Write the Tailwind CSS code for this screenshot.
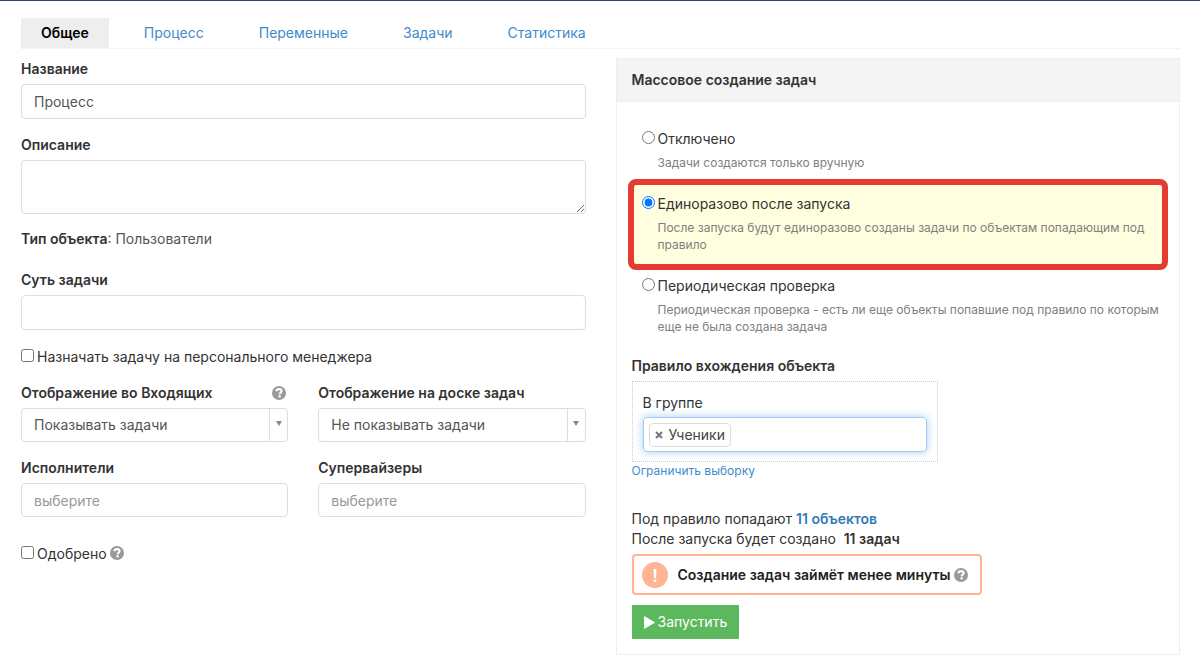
<!DOCTYPE html>
<html lang="ru">
<head>
<meta charset="utf-8">
<meta name="viewport" content="width=device-width, initial-scale=1">
<title>Процесс</title>
<script src="https://cdn.jsdelivr.net/npm/@tailwindcss/browser@4"></script>
</head>
<body class="min-h-screen overflow-x-hidden border-t border-[#2f4562] bg-white font-['Inter','Liberation_Sans',sans-serif] text-sm/5 text-[#333]">
<svg class="hidden" aria-hidden="true">
  <symbol id="help" viewBox="0 0 14 14">
    <circle cx="7" cy="7" r="7" fill="#999"/>
    <path d="M4.4 5.300C4.500 3.800 5.600 3.100 7.100 3.100s2.500.8 2.500 2c0 1.600-1.900 1.600-2 3.100" fill="none" stroke="#fff" stroke-width="2.100"/>
    <rect x="6.500" y="9.200" width="2.200" height="2.200" fill="#fff"/>
  </symbol>
</svg>
<div class="pt-[17px] pr-5 pl-[21px]">
  <nav class="flex gap-[15px] border-b border-[#f4f4f4]">
    <a href="#general" aria-current="page" class="bg-[#eee] px-5 py-[5px] font-semibold text-black">Общее</a>
    <a href="#process" class="px-5 py-[5px] text-[#428bca]">Процесс</a>
    <a href="#vars" class="px-5 py-[5px] text-[#428bca]">Переменные</a>
    <a href="#tasks" class="px-5 py-[5px] text-[#428bca]">Задачи</a>
    <a href="#stats" class="px-5 py-[5px] text-[#428bca]">Статистика</a>
  </nav>

  <form class="mt-[9px] grid grid-cols-2 items-start gap-[30px]">
    <div class="flex flex-col pt-px">
      <label for="name" class="mb-[5px] font-semibold">Название</label>
      <input id="name" type="text" value="Процесс" class="h-[35px] w-full rounded border border-[#ddd] px-3 text-[#555]">

      <label for="descr" class="mt-4 mb-[5px] font-semibold">Описание</label>
      <textarea id="descr" class="block h-[54px] w-full resize-y rounded border border-[#ddd] px-3 py-1.5 text-[#555]"></textarea>

      <p class="mt-[15px] text-[#555]"><b class="font-semibold text-[#333]">Тип объекта</b>: Пользователи</p>

      <label for="essence" class="mt-[21px] mb-[5px] font-semibold">Суть задачи</label>
      <input id="essence" type="text" class="h-[35px] w-full rounded border border-[#ddd] px-3 text-[#555]">

      <label class="mt-[17px] flex items-start gap-[3px]"><input type="checkbox" class="mt-0.5 size-[13px]">Назначать задачу на персонального менеджера</label>

      <div class="mt-4 grid grid-cols-2 gap-x-[30px] gap-y-4">
        <div>
          <div class="mb-[5px] flex items-center justify-between pr-0.5">
            <label for="inbox" class="font-semibold">Отображение во Входящих</label>
            <svg class="size-3.5" role="img" aria-label="Справка"><use href="#help"/></svg>
          </div>
          <div class="relative">
            <select id="inbox" class="h-[34px] w-full appearance-none rounded border border-[#ddd] bg-white px-3 text-[#555]"><option>Показывать задачи</option></select>
            <span class="pointer-events-none absolute inset-y-px right-px flex w-[18px] justify-center border-l border-[#ddd] pt-3"><svg class="h-[5px] w-1.5" viewBox="0 0 6 5"><path d="M0 0h6L3 5z" fill="#888"/></svg></span>
          </div>
        </div>
        <div>
          <label for="board" class="mb-[5px] block font-semibold">Отображение на доске задач</label>
          <div class="relative">
            <select id="board" class="h-[34px] w-full appearance-none rounded border border-[#ddd] bg-white px-3 text-[#555]"><option>Не показывать задачи</option></select>
            <span class="pointer-events-none absolute inset-y-px right-px flex w-[18px] justify-center border-l border-[#ddd] pt-3"><svg class="h-[5px] w-1.5" viewBox="0 0 6 5"><path d="M0 0h6L3 5z" fill="#888"/></svg></span>
          </div>
        </div>
        <div>
          <label for="workers" class="mb-[5px] block font-semibold">Исполнители</label>
          <input id="workers" type="text" placeholder="выберите" class="h-[34px] w-full rounded border border-[#ddd] px-3 placeholder:text-[#999]">
        </div>
        <div>
          <label for="supers" class="mb-[5px] block font-semibold">Супервайзеры</label>
          <input id="supers" type="text" placeholder="выберите" class="h-[34px] w-full rounded border border-[#ddd] px-3 placeholder:text-[#999]">
        </div>
      </div>

      <div class="mt-[27px] flex items-start gap-[3px]">
        <input id="approved" type="checkbox" class="mt-0.5 size-[13px]">
        <label for="approved">Одобрено</label>
        <svg class="mt-0.5 size-3.5" role="img" aria-label="Справка"><use href="#help"/></svg>
      </div>
    </div>

    <section class="border border-[#eee]">
      <h2 class="border-b border-[#eee] bg-[#f4f4f4] px-[15px] py-[11px] font-semibold">Массовое создание задач</h2>
      <div class="px-[15px] pt-[27px] pb-[15px]">
        <fieldset>
          <label class="flex items-start gap-[3px] px-2.5"><input type="radio" name="mode" class="mt-0.5 size-[13px]">Отключено</label>
          <p class="mt-[5px] pl-[26px] text-xs/[17px] text-[#808080]">Задачи создаются только вручную</p>
          <div class="-mx-1 mt-2 rounded-lg border-6 border-[#e63b30] bg-[#ffffdf] px-2 pt-[9px] pb-[11px]">
            <label class="flex items-start gap-[3px]"><input type="radio" name="mode" checked class="mt-0.5 size-[13px]">Единоразово после запуска</label>
            <p class="mt-[5px] pl-4 text-xs/[17px] text-[#808080]">После запуска будут единоразово созданы задачи по объектам попадающим под правило</p>
          </div>
          <label class="mt-1.5 flex items-start gap-[3px] px-2.5"><input type="radio" name="mode" class="mt-0.5 size-[13px]">Периодическая проверка</label>
          <p class="mt-[5px] pl-[26px] text-xs/[17px] text-[#808080]">Периодическая проверка - есть ли еще объекты попавшие под правило по которым еще не была создана задача</p>
        </fieldset>

        <h3 class="mt-[21px] mb-[5px] font-semibold">Правило вхождения объекта</h3>
        <div class="max-w-[306px] border border-dotted border-[#ccc] px-2.5 pt-[11px] pb-[9px]">
          <label for="group">В группе</label>
          <div class="mt-1 flex h-[35px] items-center gap-1 rounded border border-[#a3cdf5] px-[5px] shadow-[0_0_8px_#a3cdf5]">
            <span class="flex h-6 shrink-0 items-center gap-1.5 rounded-sm border border-[#ddd] px-[5px] text-[#444]"><button type="button" aria-label="Удалить"><svg class="size-2" viewBox="0 0 8 8"><path d="M1 1l6 6M7 1L1 7" stroke="#777" stroke-width="2"/></svg></button>Ученики</span>
            <input id="group" type="text" class="min-w-0 flex-1 outline-none">
          </div>
        </div>
        <a href="#limit" class="block w-fit text-xs/[17px] text-[#428bca]">Ограничить выборку</a>

        <p class="mt-[30px]">Под правило попадают <a href="#objects" class="font-semibold text-[#337ab7]">11 объектов</a></p>
        <p>После запуска будет создано &nbsp;<b class="font-semibold">11 задач</b></p>
        <div class="mt-[5px] flex h-[41px] w-fit items-center rounded-sm border-2 border-[#ffb594] pr-3 pl-2 font-semibold text-[#222]">
          <svg class="mr-2.5 size-[26px]" viewBox="0 0 26 26"><circle cx="13" cy="13" r="13" fill="#ffb594"/><path d="M11.500 7h3l-.5 9h-2zM11.700 17.500h2.600V20h-2.600z" fill="#fff"/></svg>
          Создание задач займёт менее минуты
          <svg class="ml-1 size-3.5" role="img" aria-label="Справка"><use href="#help"/></svg>
        </div>
        <button type="button" class="mt-2.5 flex h-[34px] items-center gap-[3px] bg-[#5cb85c] px-3 text-white"><svg class="h-[13px] w-[11px]" viewBox="0 0 11 13"><path d="M0 .8Q0 0 1 .4L10.500 6q.6.5 0 1L1 12.600Q0 13 0 12.200z" fill="#fff"/></svg>Запустить</button>
      </div>
    </section>
  </form>
</div>
</body>
</html>
